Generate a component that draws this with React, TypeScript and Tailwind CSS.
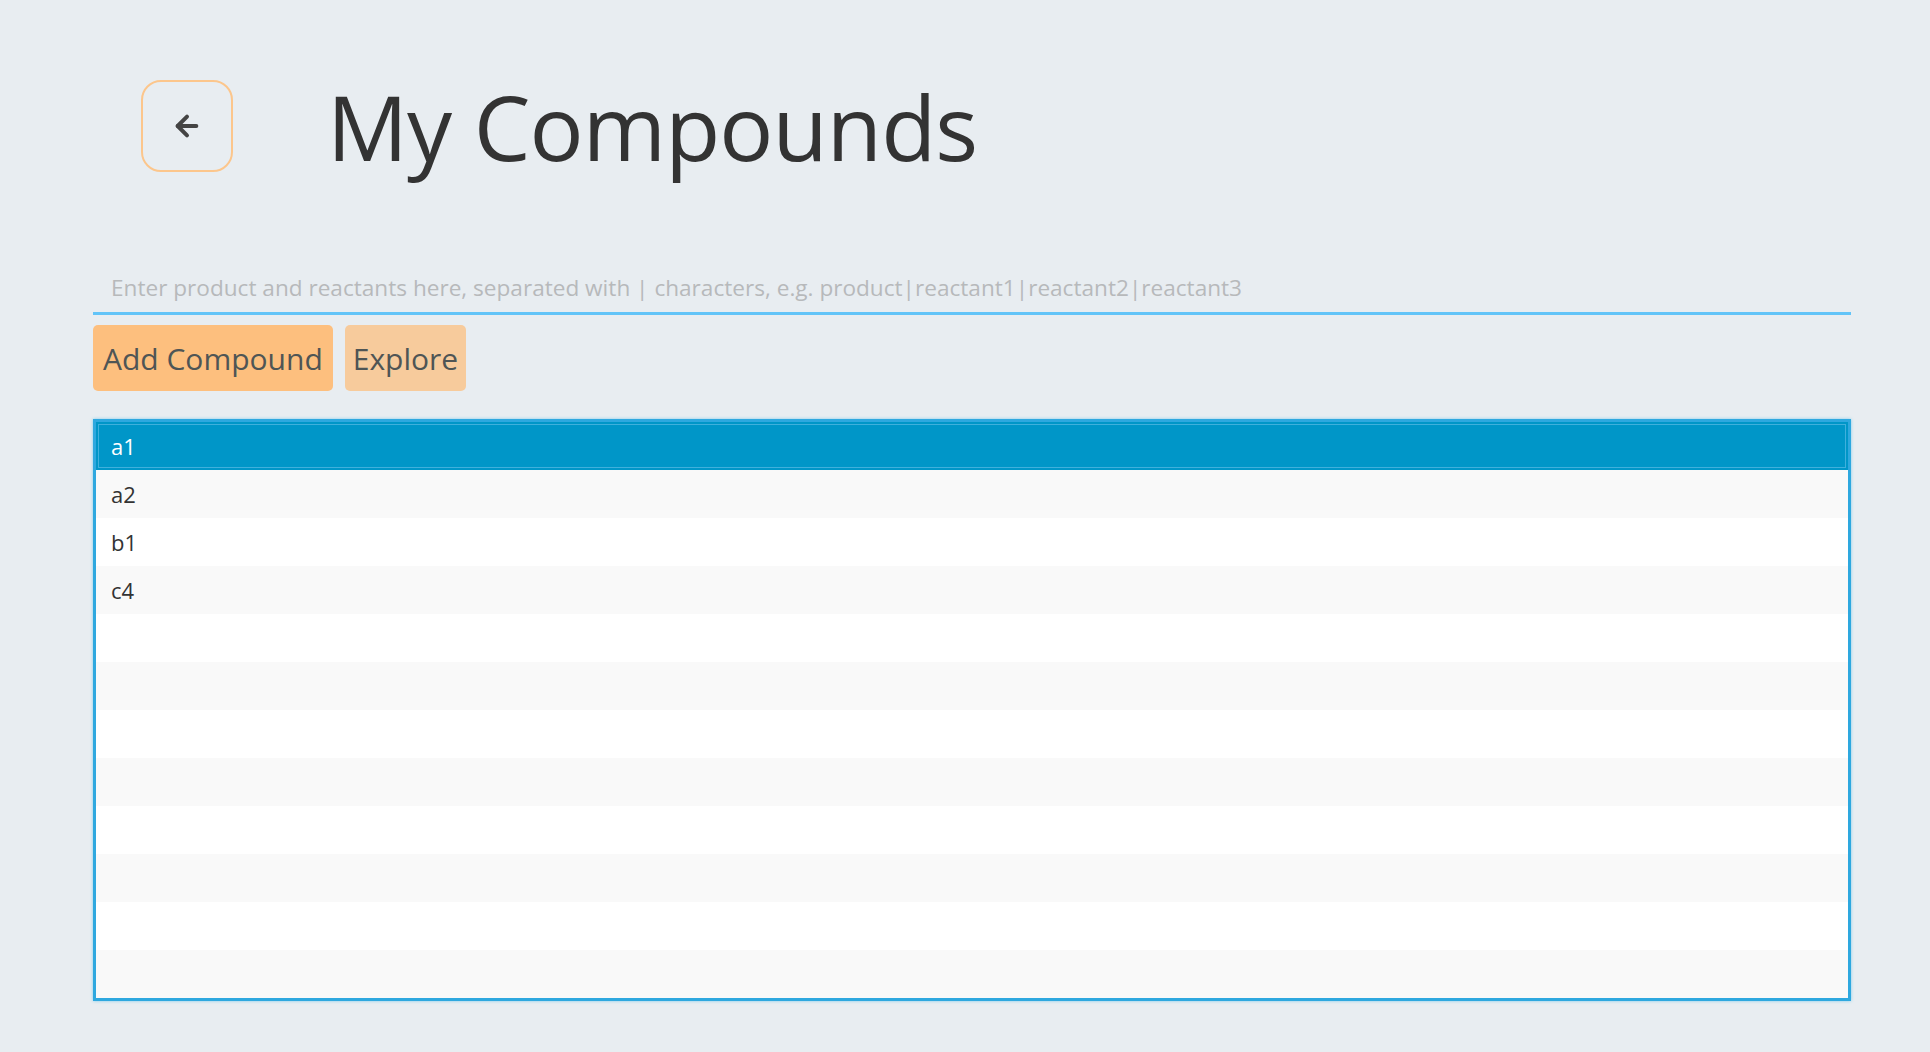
import { ArrowLeft } from "lucide-react";

const compounds = ["a1", "a2", "b1", "c4"];
const ROWS = 12;

export default function App() {
  const rows = Array.from({ length: ROWS }, (_, i) => compounds[i] ?? "");

  return (
    <div
      className="min-h-screen w-full bg-[#e8edf1] text-[#333]"
      style={{ fontFamily: '"Open Sans", "Noto Sans", sans-serif' }}
    >
      <div className="pt-[80px] pl-[93px] pr-[79px]">
        <div className="flex items-center pl-[48px]">
          <button className="flex h-[92px] w-[92px] items-center justify-center rounded-[20px] border-2 border-[#fcc68c] text-[#444]">
            <ArrowLeft size={32} strokeWidth={3} />
          </button>
          <h1 className="ml-[94px] text-[90px] leading-none tracking-[-0.01em] text-[#333] font-normal">
            My Compounds
          </h1>
        </div>

        <div className="mt-[96px]">
          <input
            type="text"
            placeholder="Enter product and reactants here, separated with | characters, e.g. product|reactant1|reactant2|reactant3"
            className="block h-[47px] w-full border-b-[3px] border-[#62c4f8] bg-transparent px-[18px] pb-[6px] text-[22.6px] text-[#333] outline-none placeholder:text-[#b7b9bb]"
          />
        </div>

        <div className="mt-[10px] flex gap-[12px]">
          <button className="h-[66px] rounded-[5px] bg-[#fdbf7e] px-[10px] text-[30px] text-[#4f5555]">
            Add Compound
          </button>
          <button className="h-[66px] rounded-[5px] bg-[#f7cb9c] px-[8px] text-[30px] text-[#4f5555]">
            Explore
          </button>
        </div>

        <div className="mt-[28px] border-[3px] border-[#2ea8df] bg-white shadow-[0_0_3px_#7fcbec]">
          {rows.map((name, i) => (
            <div
              key={i}
              className={
                i === 0
                  ? "flex h-[48px] items-center bg-[#0096c8] px-[15px] text-[22px] text-white shadow-[inset_0_0_0_2px_#0096c8,inset_0_0_0_3px_#3fb0dc]"
                  : i % 2 === 1
                    ? "flex h-[48px] items-center bg-[#f9f9f9] px-[15px] text-[22px] text-[#333]"
                    : "flex h-[48px] items-center bg-white px-[15px] text-[22px] text-[#333]"
              }
            >
              {name}
            </div>
          ))}
        </div>
      </div>
    </div>
  );
}
